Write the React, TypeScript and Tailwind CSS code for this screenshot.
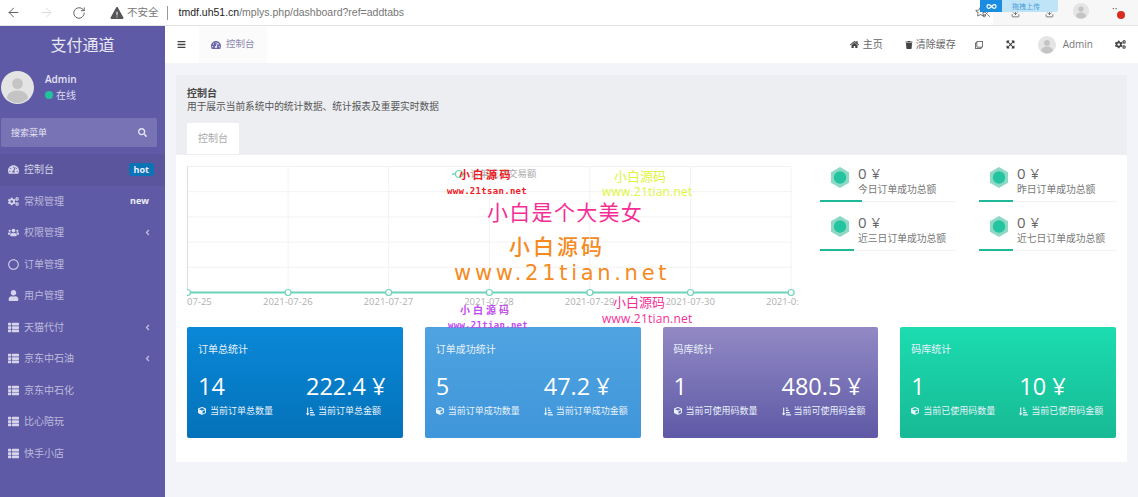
import React from "react";
import {
  FaBars,
  FaCogs,
  FaCube,
  FaExpandArrowsAlt,
  FaHome,
  FaRegCircle,
  FaRegClone,
  FaSearch,
  FaSortAmountDownAlt,
  FaThList,
  FaTachometerAlt,
  FaTrash,
  FaUser,
  FaUsers,
  FaAngleLeft,
  FaRegStar,
} from "react-icons/fa";
import { IoIosWarning } from "react-icons/io";
import { ArrowLeft, ArrowRight, Download, Infinity as InfinityIcon, RotateCw, Scissors } from "lucide-react";

const cjk = "font-['Open_Sans','Noto_Sans_CJK_SC',sans-serif]";

const menu = [
  { label: "控制台", icon: FaTachometerAlt, active: true, badge: "hot" },
  { label: "常规管理", icon: FaCogs, badge: "new" },
  { label: "权限管理", icon: FaUsers, arrow: true },
  { label: "订单管理", icon: FaRegCircle },
  { label: "用户管理", icon: FaUser },
  { label: "天猫代付", icon: FaThList, arrow: true },
  { label: "京东中石油", icon: FaThList, arrow: true },
  { label: "京东中石化", icon: FaThList },
  { label: "比心陪玩", icon: FaThList },
  { label: "快手小店", icon: FaThList },
];

const dates = ["07-25", "2021-07-26", "2021-07-27", "2021-07-28", "2021-07-29", "2021-07-30", "2021-0:"];

const stats = [
  { value: "0 ¥", label: "今日订单成功总额", bar: "w-[42px]" },
  { value: "0 ¥", label: "昨日订单成功总额", bar: "w-[34px]" },
  { value: "0 ¥", label: "近三日订单成功总额", bar: "w-[34px]" },
  { value: "0 ¥", label: "近七日订单成功总额", bar: "w-[34px]" },
];

const cards = [
  {
    title: "订单总统计",
    count: "14",
    amount: "222.4 ¥",
    countLabel: "当前订单总数量",
    amountLabel: "当前订单总金额",
    bg: "bg-gradient-to-b from-[#0a88d8] to-[#0472b9]",
  },
  {
    title: "订单成功统计",
    count: "5",
    amount: "47.2 ¥",
    countLabel: "当前订单成功数量",
    amountLabel: "当前订单成功金额",
    bg: "bg-gradient-to-b from-[#4fa3e0] to-[#3f96da]",
  },
  {
    title: "码库统计",
    count: "1",
    amount: "480.5 ¥",
    countLabel: "当前可使用码数量",
    amountLabel: "当前可使用码金额",
    bg: "bg-gradient-to-b from-[#9289c4] to-[#5f59a6]",
  },
  {
    title: "码库统计",
    count: "1",
    amount: "10 ¥",
    countLabel: "当前已使用码数量",
    amountLabel: "当前已使用码金额",
    bg: "bg-gradient-to-b from-[#1cdcb0] to-[#17ba94]",
  },
];

const Avatar = ({ size }: { size: number }) => (
  <svg width={size} height={size} viewBox="0 0 34 34" className="shrink-0">
    <circle cx="17" cy="17" r="17" fill="#e4e4e4" />
    <circle cx="17" cy="13" r="5.5" fill="#c4c4c4" />
    <path d="M6 28c1-6 6-8 11-8s10 2 11 8c-3 3-7 5-11 5s-8-2-11-5z" fill="#c4c4c4" />
  </svg>
);

const Hexagon = () => (
  <svg width="20" height="21" viewBox="0 0 20 22" className="shrink-0">
    <path d="M10 0l9.500 5.500v11L10 22 .5 16.500v-11z" fill="#8fd8c6" />
    <circle cx="10" cy="11" r="6.500" fill="#25c4a0" />
  </svg>
);

const BrowserBar = () => (
  <div className={`flex h-[26px] items-center border-b border-[#e4e4e4] bg-white ${cjk}`}>
    <ArrowLeft size={15} strokeWidth={1.5} className="ml-[6px] text-[#555]" />
    <ArrowRight size={15} strokeWidth={1.5} className="ml-[18px] text-[#d8d8d8]" />
    <RotateCw size={14} strokeWidth={1.5} className="ml-[18px] text-[#555]" />
    <IoIosWarning className="ml-[23px] text-[16px] text-[#555]" />
    <span className="ml-[2px] text-[10.500px] text-[#777]">不安全</span>
    <span className="ml-[8px] h-[14px] w-px bg-[#999]" />
    <span className="ml-[11px] font-['Liberation_Sans',sans-serif] text-[10.500px] text-[#777]">
      <span className="text-[#222]">tmdf.uh51.cn</span>/mplys.php/dashboard?ref=addtabs
    </span>
    <div className="relative ml-auto flex h-full w-[163px] items-center">
      <FaRegStar className="absolute left-0 top-[6px] text-[11px] text-[#777]" />
      <span className="absolute left-[18px] top-0 h-full w-[145px] bg-[#f7f7f7]" />
      <Scissors size={9} className="absolute left-[7px] top-[9px] text-[#555]" />
      <Download size={9} className="absolute left-[36px] top-[9px] text-[#555]" />
      <Download size={9} className="absolute left-[70px] top-[9px] text-[#555]" />
      <div className="absolute left-[5px] top-0 flex h-[12px] w-[78px] items-center rounded-b-[2px] bg-[#bfe3f7]">
        <span className="flex h-full w-[22px] items-center justify-center bg-[#1b8de0] text-white">
          <InfinityIcon size={11} strokeWidth={2.5} />
        </span>
        <span className="ml-[10px] text-[7px] leading-none text-[#4a9fd8]">拖拽上传</span>
      </div>
      <span className="absolute left-[98px] top-[3px]">
        <Avatar size={16} />
      </span>
      <span className="absolute left-[137px] top-[3px] text-[10px] leading-none text-[#555]">··</span>
      <span className="absolute left-[142px] top-[11px] h-[8px] w-[8px] rounded-full bg-[#d92b20]" />
    </div>
  </div>
);

const Sidebar = () => (
  <aside className={`flex h-[471px] w-[165px] shrink-0 flex-col bg-[#5f5aa6] ${cjk}`}>
    <div className="flex h-[37px] items-center justify-center text-[16px] text-[#e8e7f4]">支付通道</div>
    <div className="mt-[7px] flex h-[34px] items-center pl-px">
      <Avatar size={33} />
      <div className="ml-[11px]">
        <div className="text-[10px] font-semibold leading-[14px] text-[#e6e5f3]">Admin</div>
        <div className="mt-[2px] flex items-center text-[10px] leading-[14px] text-[#dddcee]">
          <span className="mr-[3px] h-[8px] w-[8px] rounded-full bg-[#1fc39c]" />
          在线
        </div>
      </div>
    </div>
    <div className="ml-px mt-[14px] flex h-[29px] w-[156px] items-center justify-between rounded-[2px] bg-[#7873b5] px-[10px] text-[9px] text-[#e6e5f3]">
      搜索菜单
      <FaSearch className="text-[9px]" />
    </div>
    <nav className="mt-[7px] flex flex-col">
      {menu.map((item) => (
        <div
          key={item.label}
          className={`flex h-[31.5px] items-center pl-[8px] pr-[11px] text-[10px] text-[#bdbadd] ${item.active ? "bg-[#5a559c] text-[#d6d4ea]" : ""}`}
        >
          <item.icon className="w-[11px] text-[11px] text-[#d6d4ea]" />
          <span className="ml-[5px]">{item.label}</span>
          {item.badge === "hot" && (
            <span className="ml-auto rounded-[3px] bg-[#0a74b6] px-[5px] text-[9px] font-bold leading-[13px] text-[#eef]">hot</span>
          )}
          {item.badge === "new" && (
            <span className="ml-auto pr-[5px] text-[9px] font-bold leading-[14px] text-[#eeeef8]">new</span>
          )}
          {item.arrow && <FaAngleLeft className="ml-auto mr-[2px] text-[9px] text-[#bdbade]" />}
        </div>
      ))}
    </nav>
  </aside>
);

const TopNav = () => (
  <header className={`flex h-[37px] items-center bg-white text-[10px] text-[#666] ${cjk}`}>
    <FaBars className="ml-[12px] text-[9px] text-[#444]" />
    <div className="ml-[13px] flex h-full items-center bg-[#fbfbfc] px-[12px] text-[9.500px] text-[#8c8ab0]">
      <FaTachometerAlt className="mr-[5px] text-[10px] text-[#6a66ab]" />
      控制台
    </div>
    <div className="ml-auto flex items-center pr-[12px]">
      <FaHome className="mr-[4px] text-[9px] text-[#444]" />
      主页
      <FaTrash className="ml-[22px] mr-[3px] text-[8px] text-[#444]" />
      清除缓存
      <FaRegClone className="ml-[19px] text-[8px] text-[#444]" />
      <FaExpandArrowsAlt className="ml-[23px] text-[9px] text-[#333]" />
      <span className="ml-[23px]">
        <Avatar size={18} />
      </span>
      <span className="ml-[7px] text-[#777]">Admin</span>
      <FaCogs className="ml-[22px] text-[11px] text-[#444]" />
    </div>
  </header>
);

const Chart = () => (
  <div className={`relative h-[161px] w-[620px] shrink-0 ${cjk}`}>
    <svg width="620" height="150" viewBox="0 0 620 150" className="absolute left-0 top-0">
      {[0, 1, 2, 3, 4, 5].map((i) => (
        <line key={i} x1="0" x2="604" y1={0.5 + i * 25.2} y2={0.5 + i * 25.2} stroke="#f2f2f2" />
      ))}
      {[0, 1, 2, 3, 4, 5, 6].map((i) => (
        <line key={i} x1={0.5 + i * 100.6} x2={0.5 + i * 100.6} y1="0" y2="126" stroke={i === 0 ? "#dedede" : "#f2f2f2"} />
      ))}
      <line x1="0" x2="604" y1="126.500" y2="126.500" stroke="#6fd3bc" strokeWidth="2" />
      {[0, 1, 2, 3, 4, 5, 6].map((i) => (
        <circle key={i} cx={0.5 + i * 100.6} cy="126.500" r="3" fill="#fff" stroke="#6fd3bc" strokeWidth="1.200" />
      ))}
      <line x1="265" x2="279" y1="8" y2="8" stroke="#6fd3bc" strokeWidth="1.500" />
      <circle cx="272" cy="8" r="3.500" fill="#fff" stroke="#6fd3bc" strokeWidth="1.200" />
    </svg>
    <div className="absolute left-0 top-[129px] flex text-[9.500px] text-[#b0b0b0]">
      {dates.map((d, i) => (
        <span key={d} className={i === 0 ? "w-[76px] shrink-0" : "w-[100.6px] shrink-0"}>
          {d}
        </span>
      ))}
    </div>
    <span className="absolute left-[283px] top-[1px] text-[9.500px] text-[#aaa]">订单成功交易额</span>
    {/* watermarks */}
    <span className="absolute left-[272px] top-[1px] text-[11px] font-semibold tracking-[2.500px] text-[#ee1c25]">小白源码</span>
    <span className="absolute left-[260px] top-[19px] font-['DejaVu_Sans_Mono',monospace] text-[9px] font-bold tracking-[0.3px] text-[#ee1c25]">www.21tsan.net</span>
    <span className="absolute left-[427px] top-[1px] text-[13px] text-[#e0f53a]">小白源码</span>
    <span className="absolute left-[415px] top-[17px] text-[12px] tracking-[0.2px] text-[#e0f53a]">www.21tian.net</span>
    <span className="absolute left-[300px] top-[31px] text-[21px] tracking-[1.300px] text-[#f52e96]">小白是个大美女</span>
    <span className="absolute left-[322px] top-[65px] text-[21px] font-medium tracking-[3px] text-[#f58a1f]">小白源码</span>
    <span className="absolute left-[267px] top-[92px] font-['DejaVu_Sans',sans-serif] text-[21px] tracking-[3.700px] text-[#f58a1f]">www.21tian.net</span>
    <span className="absolute left-[426px] top-[127px] text-[13px] text-[#f52e96]">小白源码</span>
    <span className="absolute left-[415px] top-[144px] text-[12px] tracking-[0.2px] text-[#f52e96]">www.21tian.net</span>
    <span className="absolute left-[273px] top-[137px] text-[10px] font-semibold tracking-[3px] text-[#c14df0]">小白源码</span>
    <span className="absolute left-[261px] top-[153px] z-10 font-['DejaVu_Sans_Mono',monospace] text-[9px] font-bold leading-[12px] tracking-[0.3px] text-[#c14df0]">www.21tian.net</span>
  </div>
);

const Stat = ({ value, label, bar }: { value: string; label: string; bar: string }) => (
  <div className="relative flex h-[38px] items-start border-b border-[#f3f3f3] pl-[10px]">
    <span className="mt-[3px]">
      <Hexagon />
    </span>
    <div className="ml-[8px]">
      <div className="text-[15px] leading-[19px] tracking-[0.5px] text-[#666]">{value}</div>
      <div className="text-[9.800px] leading-[14px] text-[#777]">{label}</div>
    </div>
    <span className={`absolute -bottom-px left-0 h-[2px] bg-[#1fb898] ${bar}`} />
  </div>
);

const Card = ({ card }: { card: (typeof cards)[number] }) => (
  <div className={`flex h-[111px] flex-1 flex-col rounded-[2px] px-[11px] pt-[15px] text-white ${card.bg}`}>
    <div className="text-[10px] leading-[14px] text-[#e8f2fa]">{card.title}</div>
    <div className="mt-[15px] grid grid-cols-[108px_1fr]">
      <div>
        <div className="text-[23.500px] leading-[30px]">{card.count}</div>
        <div className="mt-[3px] flex items-center whitespace-nowrap text-[9px] leading-[14px] text-[#e8f2fa]">
          <FaCube className="mr-[4px] text-[8px]" />
          {card.countLabel}
        </div>
      </div>
      <div>
        <div className="whitespace-nowrap text-[23.500px] leading-[30px]">{card.amount}</div>
        <div className="mt-[3px] flex items-center whitespace-nowrap text-[9px] leading-[14px] text-[#e8f2fa]">
          <FaSortAmountDownAlt className="mr-[3px] text-[9px]" />
          {card.amountLabel}
        </div>
      </div>
    </div>
  </div>
);

export default function App() {
  return (
    <div className={`h-[497px] w-[1138px] overflow-hidden bg-[#f3f4f9] ${cjk}`}>
      <BrowserBar />
      <div className="flex">
        <Sidebar />
        <main className="min-w-0 flex-1">
          <TopNav />
          <div className="pl-[11px] pr-[11px] pt-[12px]">
            <div className="h-[80px] bg-[#eceef1] pl-[11px] pt-[11px]">
              <div className="text-[10px] font-semibold leading-[14px] text-[#444]">控制台</div>
              <div className="text-[9.700px] leading-[14px] text-[#555]">用于展示当前系统中的统计数据、统计报表及重要实时数据</div>
              <div className="mt-[9px] flex h-[31px] w-[52px] items-center justify-center bg-white text-[10px] text-[#aaa]">控制台</div>
            </div>
            <div className="h-[307px] bg-white px-[11px] pt-[11px]">
              <div className="flex h-[161px]">
                <Chart />
                <div className="-mt-[2px] ml-[13px] grid h-fit flex-1 grid-cols-[136px_138px] gap-x-[23px] gap-y-[11px]">
                  {stats.map((s) => (
                    <Stat key={s.label} {...s} />
                  ))}
                </div>
              </div>
              <div className="flex gap-[22px]">
                {cards.map((c) => (
                  <Card key={c.countLabel} card={c} />
                ))}
              </div>
            </div>
          </div>
        </main>
      </div>
    </div>
  );
}
